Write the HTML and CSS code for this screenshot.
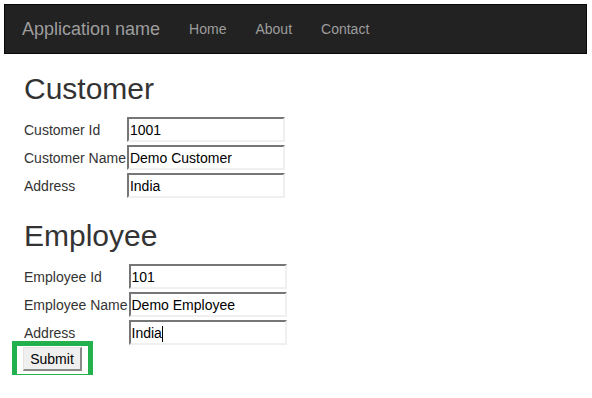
FILE: index.html
```html
<!DOCTYPE html>
<html lang="en">
<head>
    <meta charset="UTF-8">
    <meta name="viewport" content="width=device-width, initial-scale=1.0">
    <title>Customer and Employee</title>
    <link rel="stylesheet" href="styles.css">
</head>
<body>
    <div class="navbar">
        <a class="brand" href="#">Application name</a>
        <ul class="nav">
            <li><a href="#">Home</a></li>
            <li><a href="#">About</a></li>
            <li><a href="#">Contact</a></li>
        </ul>
    </div>

    <div class="content">
        <h2>Customer</h2>
        <table class="form-table">
            <tr>
                <td class="label">Customer Id</td>
                <td><input type="text" value="1001"></td>
            </tr>
            <tr>
                <td class="label">Customer Name</td>
                <td><input type="text" value="Demo Customer"></td>
            </tr>
            <tr>
                <td class="label">Address</td>
                <td><input type="text" value="India"></td>
            </tr>
        </table>

        <h2>Employee</h2>
        <table class="form-table">
            <tr>
                <td class="label">Employee Id</td>
                <td><input type="text" value="101"></td>
            </tr>
            <tr>
                <td class="label">Employee Name</td>
                <td><input type="text" value="Demo Employee"></td>
            </tr>
            <tr>
                <td class="label">Address</td>
                <td><input type="text" value="India" class="has-caret"></td>
            </tr>
        </table>

        <span class="highlight">
            <button class="submit-btn" type="submit">Submit</button>
        </span>
    </div>
</body>
</html>
```

FILE: styles.css
```css
*, *::before, *::after {
    box-sizing: border-box;
}

body {
    margin: 0;
    padding: 4px;
    font-family: "Liberation Sans", Arial, sans-serif;
    font-size: 14px;
    color: #333;
    background-color: white;
}

.navbar {
    display: flex;
    align-items: center;
    height: 50px;
    width: 583px;
    padding-left: 17px;
    background-color: #222;
    border: 1px solid #080808;
}

.brand {
    font-size: 18px;
    color: #9d9d9d;
    text-decoration: none;
    padding-right: 14px;
}

.nav {
    display: flex;
    list-style: none;
    margin: 0;
    padding: 0;
}

.nav a {
    display: block;
    padding: 0 15px;
    color: #9d9d9d;
    text-decoration: none;
    font-size: 14px;
}

.nav li:not(:first-child) a {
    padding-left: 14px;
}

.content {
    padding-left: 20px;
}

h2 {
    font-size: 30px;
    font-weight: 500;
    line-height: 1.1;
    margin: 18px 0 10px;
}

.form-table {
    border-collapse: separate;
    border-spacing: 0 3px;
    margin-top: -1px;
}

.form-table td {
    padding: 0;
}

.form-table .label {
    padding-right: 1px;
    white-space: nowrap;
}

.form-table input {
    display: block;
    width: 158px;
    height: 25px;
    padding: 0 1px;
    font-family: "Liberation Sans", Arial, sans-serif;
    font-size: 14px;
    color: black;
    background-color: white;
    border-top: 2px solid #767676;
    border-left: 2px solid #767676;
    border-right: 2px solid #f0f0f0;
    border-bottom: 2px solid #f0f0f0;
    outline: none;
}

.form-table input.has-caret {
    background-image: linear-gradient(black, black);
    background-size: 1px 16px;
    background-position: 31px 4px;
    background-repeat: no-repeat;
}

.highlight {
    position: relative;
    display: inline-block;
    margin-left: -1px;
    margin-top: -1px;
}

/* green annotation box drawn over the button */
.highlight::after {
    content: "";
    position: absolute;
    left: -11px;
    top: -6px;
    width: 81px;
    height: 38px;
    border: 5px solid #22b14c;
}

.submit-btn {
    display: block;
    width: 59px;
    height: 24px;
    padding: 0;
    font-family: "Liberation Sans", Arial, sans-serif;
    font-size: 14px;
    color: black;
    background-color: #efefef;
    border-top: 1px solid #e3e3e3;
    border-left: 1px solid #e3e3e3;
    border-right: 2px solid #8a8a8a;
    border-bottom: 2px solid #8a8a8a;
}
```
